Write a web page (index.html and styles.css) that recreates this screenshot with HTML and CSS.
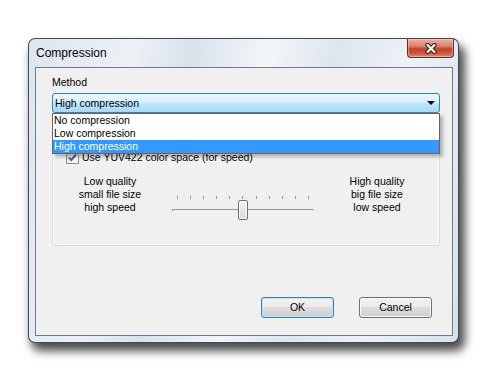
FILE: index.html
```html
<!DOCTYPE html>
<html lang="EN">
 <head>
  <title>Compression</title>
  <meta charset="UTF-8">
  <link rel="stylesheet" href="styles.css">
 </head>
 <body>

 <div class="desk">
  <div class="window">

   <div class="titlebar">
    <span class="title">Compression</span>
    <div class="close">
     <svg width="14" height="11" viewBox="0 0 14 11">
      <path d="M3.5 2 L10.5 9 M10.5 2 L3.5 9" stroke="#3b1710" stroke-width="4.2" stroke-linecap="round"/>
      <path d="M3.5 2 L10.5 9 M10.5 2 L3.5 9" stroke="#ffffff" stroke-width="2.2" stroke-linecap="round"/>
     </svg>
    </div>
   </div>

   <div class="client">
    <div class="caption">Method</div>
    <div class="combo">
     <span>High compression</span>
     <span class="arrow"></span>
     <ul class="droplist">
      <li>No compression</li>
      <li>Low compression</li>
      <li class="selected">High compression</li>
     </ul>
    </div>

    <div class="group">
     <div class="check">
      <span class="checkbox">
       <svg width="11" height="11" viewBox="0 0 11 11">
        <path d="M2 5.5 L4.3 8 L9 2.5" fill="none" stroke="#4c5f8c" stroke-width="2"/>
       </svg>
      </span>
      <span>Use YUV422 color space (for speed)</span>
     </div>

     <div class="quality">
      <div class="end">Low quality<br>small file size<br>high speed</div>
      <div class="slider">
       <div class="ticks">
        <span></span><span></span><span></span><span></span><span></span><span></span>
        <span></span><span></span><span></span><span></span><span></span>
       </div>
       <div class="track"></div>
       <div class="thumb"></div>
      </div>
      <div class="end">High quality<br>big file size<br>low speed</div>
     </div>
    </div>

    <div class="buttons">
     <div class="btn default">OK</div>
     <div class="btn">Cancel</div>
    </div>
   </div>

  </div>
 </div>

 </body>
</html>
```

FILE: styles.css
```css
body { margin: 0; background: #ffffff; font-family: "Liberation Sans", Arial, sans-serif; font-size: 10.5px; color: #000; }
.desk { padding: 38px 0 0 28px; min-height: 369px; box-sizing: border-box; }

/* window frame */
.window {
  position: relative;
  width: 431px; height: 305px; box-sizing: border-box;
  border: 1px solid rgba(35, 45, 60, .85); border-radius: 7px;
  background: linear-gradient(100deg, #dde5ee 0%, #edf1f6 22%, #d9e1eb 34%, #f3f6f9 50%, #dee5ee 64%, #eef2f7 80%, #d8e1eb 100%);
  display: flex; flex-direction: column;
}
/* soft drop shadow under the frame */
.window::before {
  content: ""; position: absolute; z-index: -1;
  left: 2px; top: 6px; right: -7px; bottom: -9px;
  border-radius: 9px; background: rgba(0, 0, 0, .7);
  filter: blur(5px);
}
.titlebar { height: 28px; display: flex; justify-content: space-between; align-items: flex-start; padding-left: 7px; }
.title { line-height: 28px; font-size: 12px; }
.close {
  width: 47px; height: 19px; box-sizing: border-box; margin-right: 4px;
  border: 1px solid #6a2a22; border-top: none; border-radius: 0 0 4px 4px;
  background: linear-gradient(#eab2a4 0%, #d9826c 40%, #c0412b 55%, #cb5a3f 80%, #e08a6c 100%);
  box-shadow: inset 0 0 0 1px rgba(255, 220, 210, .45);
  display: flex; align-items: center; justify-content: center;
}

.client {
  height: 269px; box-sizing: border-box; margin: 0 5px 6px 6px;
  border: 1px solid #6f7b88; background: #f0f0f0;
  padding: 8px 12px 0 16px;
  display: flex; flex-direction: column;
}
.caption { line-height: 13px; }

/* combo box, dropped down */
.combo {
  position: relative; margin-top: 4px; height: 20px; box-sizing: border-box;
  border: 1px solid #3c7fb1; border-radius: 3px;
  background: linear-gradient(#eaf6fd 0%, #d9f0fc 45%, #bee6fd 52%, #a7d9f5 100%);
  display: flex; align-items: center; justify-content: space-between; padding: 0 4px 0 2px;
}
.arrow { width: 0; height: 0; border-left: 4px solid transparent; border-right: 4px solid transparent; border-top: 4px solid #000; }
.droplist {
  position: absolute; z-index: 2; top: calc(100% + 1px); left: -1px; right: -1px;
  margin: 0; padding: 0; list-style: none;
  background: #fff; border: 1px solid #646464;
  box-shadow: 3px 3px 3px rgba(0, 0, 0, .25);
}
.droplist li { line-height: 13px; padding-left: 1px; }
.droplist .selected { background: #3399ff; color: #fff; }

/* options group */
.group {
  margin-top: 30px; height: 103px; box-sizing: border-box;
  border: 1px solid #d5dfe5; border-radius: 3px; box-shadow: inset 0 0 0 1px #fff;
  padding-top: 7px;
}
.check { display: flex; align-items: center; gap: 3px; padding-left: 13px; line-height: 13px; }
.checkbox {
  width: 13px; height: 13px; box-sizing: border-box; border: 1px solid #8e8f8f;
  background: linear-gradient(135deg, #dcdcdc, #fbfbfb);
  display: flex; align-items: center; justify-content: center;
}
.quality { display: grid; grid-template-columns: 114px 142px 116px; column-gap: 5px; margin-top: 11px; }
.end { text-align: center; line-height: 13px; }
.slider { position: relative; height: 45px; }
.ticks { display: flex; justify-content: space-between; padding: 0 5px; margin-top: 21px; }
.ticks span { width: 1px; height: 3px; background: #9a9a9a; }
.track {
  margin-top: 10px; height: 3px; box-sizing: border-box;
  border-top: 1px solid #9d9d9d; border-left: 1px solid #9d9d9d; border-right: 1px solid #c8c8c8;
  background: #e6e6e6; border-bottom: 1px solid #fff;
}
.thumb {
  position: absolute; left: 66px; top: 25px; width: 10px; height: 20px; box-sizing: border-box;
  border: 1px solid #6f6f6f; border-radius: 2px;
  background: linear-gradient(#f4f4f4, #dadada);
  box-shadow: inset 0 0 0 1px #fbfbfb;
}

/* dialog buttons */
.buttons { margin-top: auto; margin-bottom: 17px; margin-right: 8px; display: flex; justify-content: flex-end; gap: 25px; }
.btn {
  width: 73px; height: 21px; box-sizing: border-box; line-height: 19px; text-align: center;
  border: 1px solid #707070; border-radius: 3px;
  background: linear-gradient(#f2f2f2 0%, #ebebeb 49%, #dddddd 50%, #cfcfcf 100%);
  box-shadow: inset 0 0 0 1px #fcfcfc;
}
.btn.default { border-color: #3c7fb1; box-shadow: inset 0 0 0 1px #bfe3f7; }
```
